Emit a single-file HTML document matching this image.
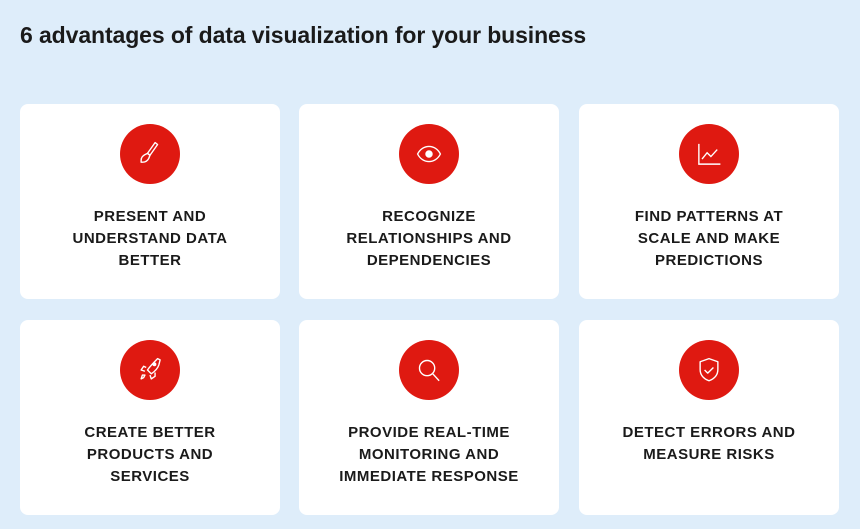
<!DOCTYPE html>
<html><head><style>
body{margin:0;width:860px;height:529px;background:#deedfa;font-family:"Liberation Sans",sans-serif;position:relative;overflow:hidden}
h1{position:absolute;left:20px;top:22px;margin:0;font-size:23px;font-weight:bold;color:#1a1a1a;letter-spacing:-0.1px}
.c{position:absolute;width:260px;height:195px;background:#fff;border-radius:8px}
.i{position:absolute;left:100px;top:20px;width:60px;height:60px;border-radius:50%;background:#df1911}
.i svg{position:absolute;left:11px;top:11px;width:38px;height:38px}
.t{position:absolute;left:0;right:0;top:102px;text-align:center;font-weight:bold;font-size:15px;line-height:22px;color:#1a1a1a;letter-spacing:0.5px}
</style></head><body>
<h1>6 advantages of data visualization for your business</h1>
<div class="c" style="left:20px;top:104px"><div class="i"><svg viewBox="0 0 30 30" fill="none" stroke="#fff" stroke-width="1.1" stroke-linejoin="round"><path d="M19 6l2 1.5-6 8.5-2-1.5z"/><path d="M13 14.5l2 1.5-1 2.5c-1 2-3 3-5 3H8v-1.5c0-2 1-3.5 3-4.5z"/></svg></div><div class="t">PRESENT AND<br>UNDERSTAND DATA<br>BETTER</div></div>
<div class="c" style="left:299px;top:104px"><div class="i"><svg viewBox="0 0 30 30" fill="none" stroke="#fff" stroke-width="1.1"><path d="M6 15c2-4 5.5-6 9-6s7 2 9 6c-2 4-5.5 6-9 6s-7-2-9-6z"/><circle cx="15" cy="15" r="2.4" fill="#fff"/></svg></div><div class="t">RECOGNIZE<br>RELATIONSHIPS AND<br>DEPENDENCIES</div></div>
<div class="c" style="left:579px;top:104px"><div class="i"><svg viewBox="0 0 30 30" fill="none" stroke="#fff" stroke-width="1.1"><path d="M7 7v16h17"/><path d="M9.5 19l4-5 3 3 5-5.5"/></svg></div><div class="t">FIND PATTERNS AT<br>SCALE AND MAKE<br>PREDICTIONS</div></div>
<div class="c" style="left:20px;top:320px"><div class="i"><svg viewBox="0 0 30 30" fill="none" stroke="#fff" stroke-width="1.1" stroke-linejoin="round"><path d="M21 6l2 1-1 4c-1 3-3 5-6 7l-3-3c2-3 4-5 8-9z"/><circle cx="18.5" cy="10.5" r="1" fill="#fff"/><path d="M12 13l-2-1-2 3 3 1M19 17v3l-3 2-1-3"/><path d="M11 19l-1 2-2 1 1-3z"/></svg></div><div class="t">CREATE BETTER<br>PRODUCTS AND<br>SERVICES</div></div>
<div class="c" style="left:299px;top:320px"><div class="i"><svg viewBox="0 0 30 30" fill="none" stroke="#fff" stroke-width="1.1"><circle cx="13.5" cy="13.5" r="6"/><path d="M18 18l5 5.5"/></svg></div><div class="t">PROVIDE REAL-TIME<br>MONITORING AND<br>IMMEDIATE RESPONSE</div></div>
<div class="c" style="left:579px;top:320px"><div class="i"><svg viewBox="0 0 30 30" fill="none" stroke="#fff" stroke-width="1.1" stroke-linejoin="round"><path d="M15 6l7 2.5v6c0 4.5-3 7.5-7 9-4-1.5-7-4.5-7-9v-6z"/><path d="M11.5 15l2.5 2.5 4.5-4.5"/></svg></div><div class="t">DETECT ERRORS AND<br>MEASURE RISKS</div></div>
</body></html>
